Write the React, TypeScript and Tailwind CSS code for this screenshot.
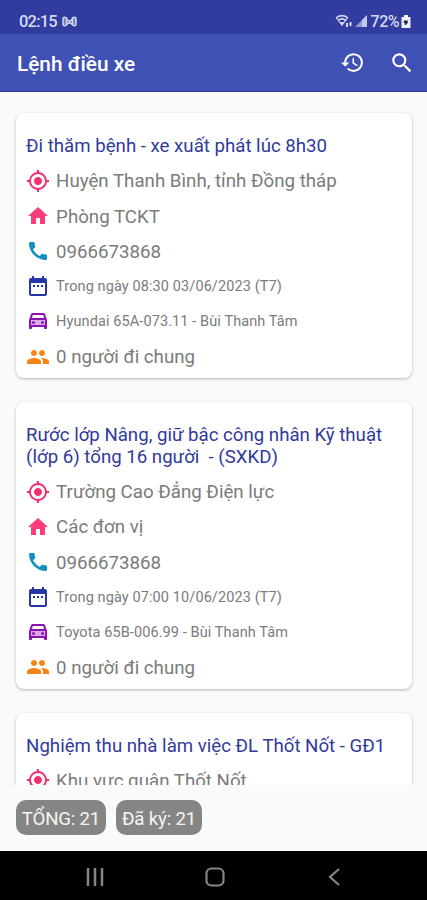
import type { IconType } from 'react-icons'
import { MdCall, MdDateRange, MdGpsFixed, MdGroup, MdHistory, MdSearch } from 'react-icons/md'

interface Trip {
  title: string
  place: string
  unit?: string
  phone?: string
  time?: string
  car?: string
  people?: string
}

const trips: Trip[] = [
  {
    title: 'Đi thăm bệnh - xe xuất phát lúc 8h30',
    place: 'Huyện Thanh Bình, tỉnh Đồng tháp',
    unit: 'Phòng TCKT',
    phone: '0966673868',
    time: 'Trong ngày 08:30 03/06/2023 (T7)',
    car: 'Hyundai 65A-073.11 - Bùi Thanh Tâm',
    people: '0 người đi chung',
  },
  {
    title: 'Rước lớp Nâng, giữ bậc công nhân Kỹ thuật\n(lớp 6) tổng 16 người  - (SXKD)',
    place: 'Trường Cao Đẳng Điện lực',
    unit: 'Các đơn vị',
    phone: '0966673868',
    time: 'Trong ngày 07:00 10/06/2023 (T7)',
    car: 'Toyota 65B-006.99 - Bùi Thanh Tâm',
    people: '0 người đi chung',
  },
  {
    title: 'Nghiệm thu nhà làm việc ĐL Thốt Nốt - GĐ1',
    place: 'Khu vực quận Thốt Nốt',
  },
]

function HomeIcon({ className }: { className?: string }) {
  return (
    <svg viewBox="0 0 24 24" fill="currentColor" className={className}>
      <path d="M10 20v-6h4v6h5v-8h3L12 3 2 12h3v8z" />
    </svg>
  )
}

function CarIcon({ className }: { className?: string }) {
  return (
    <svg viewBox="0 0 24 24" fill="currentColor" className={className}>
      <path d="M4 11h16v7H4z" opacity=".35" />
      <path d="M18.92 5.010C18.720 4.420 18.160 4 17.500 4h-11c-.66 0-1.210.42-1.420 1.010L3 11v8c0 .55.45 1 1 1h1c.55 0 1-.45 1-1v-1h12v1c0 .55.45 1 1 1h1c.55 0 1-.45 1-1v-8l-2.080-5.990zM6.850 6h10.290l1.080 3.110H5.770L6.850 6zM19 16H5v-5h14v5z" />
      <circle cx="7.500" cy="13.500" r="1.500" />
      <circle cx="16.500" cy="13.500" r="1.500" />
    </svg>
  )
}

interface RowProps {
  icon: IconType | typeof HomeIcon
  color: string
  text?: string
  small?: boolean
}

function Row({ icon: Icon, color, text, small }: RowProps) {
  if (!text) return null

  return (
    <div className="flex h-[35.2px] items-center">
      <Icon className={`size-6 shrink-0 ${color}`} />
      <span className={`ml-1.5 whitespace-pre text-[#7b7b7b] ${small ? 'pt-0.5 text-[14.5px] tracking-[0.1px]' : 'pt-[1.5px] text-[18.7px]'}`}>{text}</span>
    </div>
  )
}

function TripCard({ trip }: { trip: Trip }) {
  return (
    <div className="shrink-0 rounded-[8px] bg-white pt-[22px] pr-[10px] pb-1 pl-[10.6px] shadow-[0_1px_3px_rgba(0,0,0,0.28)]">
      <h2 className="mb-1.5 text-[18.65px] leading-[22px] whitespace-pre text-[#303a9b]">{trip.title}</h2>
      <Row icon={MdGpsFixed} color="text-[#f52d6e]" text={trip.place} />
      <Row icon={HomeIcon} color="text-[#fb3d7d]" text={trip.unit} />
      <Row icon={MdCall} color="text-[#108fc0]" text={trip.phone} />
      <Row icon={MdDateRange} color="text-[#2636a5]" text={trip.time} small />
      <Row icon={CarIcon} color="text-[#8d12b4]" text={trip.car} small />
      <Row icon={MdGroup} color="text-[#f98211]" text={trip.people} />
    </div>
  )
}

function StatusBar() {
  return (
    <div className="flex h-[34px] items-center bg-[#303c9e] pt-[8px] pr-4 pl-[19px] text-[#d5d9f5]">
      <span className="pt-0.5 text-[16.5px] font-medium tracking-[-0.8px]">02:15</span>
      <svg viewBox="0 0 16 14" className="ml-[5px] h-[13px] w-[15px]" fill="none" stroke="currentColor" strokeWidth="1.6">
        <path d="M5 4C4.500 2 1 1.500 1 4v6c0 2.500 3.500 2 4 0zM11 4c.5-2 4-2.500 4 0v6c0 2.500-3.500 2-4 0z" fill="currentColor" fillOpacity=".45" />
        <path d="M4.500 4 8 7l3.500-3M5 10l3-2 3 2" />
      </svg>
      <div className="ml-auto flex items-center">
        <svg viewBox="0 0 18 14" className="h-[14px] w-[18px]" fill="none" stroke="currentColor" strokeWidth="1.6">
          <path d="M1 4C4 .8 10 .8 13 4M3 6.500c2.500-2 5.500-2 8 0" />
          <path d="M1.500 4 7 11l5.500-7" strokeWidth="1.200" />
          <path d="M5 8h4l-2 4z" fill="currentColor" stroke="none" />
          <path d="M12 9v4M15.500 8v4" strokeWidth="2" />
        </svg>
        <svg viewBox="0 0 12 12" className="ml-0.5 size-3" fill="currentColor">
          <path d="M0 12 12 0v12z" opacity=".6" />
          <path d="M7 5l5-5v12H7z" opacity=".7" />
        </svg>
        <span className="ml-1 pt-0.5 text-[16px] font-medium tracking-[-0.5px]">72%</span>
        <svg viewBox="0 0 10 13" className="ml-0.5 h-[13px] w-[10px]">
          <path d="M3 0h4v2h2.500v11H.5V2H3z" fill="#eef0fc" />
          <path d="M2.800 5.500h4v2.200L4.800 10H3.500l.8-1.800H2.800z" fill="#20265c" />
        </svg>
      </div>
    </div>
  )
}

export default function App() {
  return (
    <div className="flex h-[900px] w-[427px] flex-col overflow-hidden bg-[#fafafa] font-[Roboto,sans-serif]">
      <StatusBar />

      <header className="flex h-[58px] items-center border-b border-[#303c9e] bg-[#3f51b5] pr-[12px] pl-[17px] text-white">
        <h1 className="pt-1 text-[20.8px] font-medium">Lệnh điều xe</h1>
        <MdHistory className="ml-auto size-[25px]" />
        <MdSearch className="ml-6 size-[26px]" />
      </header>

      <main className="flex h-[693px] shrink-0 flex-col gap-[23.8px] overflow-hidden px-[15.5px] pt-[21px]">
        {trips.map(t => <TripCard key={t.title} trip={t} />)}
      </main>

      <div className="flex h-[66px] shrink-0 items-start gap-[10px] pt-[15px] pl-4 text-[18.7px] text-[#f5f5f5]">
        <span className="flex h-[35px] w-[90px] items-center justify-center rounded-[10px] bg-[#858585] pt-[3px] tracking-[-0.2px] whitespace-nowrap">TỔNG: 21</span>
        <span className="flex h-[35px] w-[86px] items-center justify-center rounded-[10px] bg-[#858585] pt-[3px] tracking-[-0.2px] whitespace-nowrap">Đã ký: 21</span>
      </div>

      <nav className="flex h-[49px] shrink-0 items-center justify-between bg-black pt-0.5 pr-[82px] pl-[84px] text-[#858585]">
        <svg viewBox="0 0 22 22" className="size-[22px]" fill="none" stroke="currentColor" strokeWidth="2.5">
          <path d="M4 2v18M11 2v18M18 2v18" />
        </svg>
        <svg viewBox="0 0 22 22" className="size-[22px]" fill="none" stroke="currentColor" strokeWidth="2.2">
          <rect x="2.5" y="2.5" width="17" height="17" rx="5" />
        </svg>
        <svg viewBox="0 0 22 22" className="size-[22px]" fill="none" stroke="currentColor" strokeWidth="2.2">
          <path d="M16 3 7 11l9 8" />
        </svg>
      </nav>
    </div>
  )
}
